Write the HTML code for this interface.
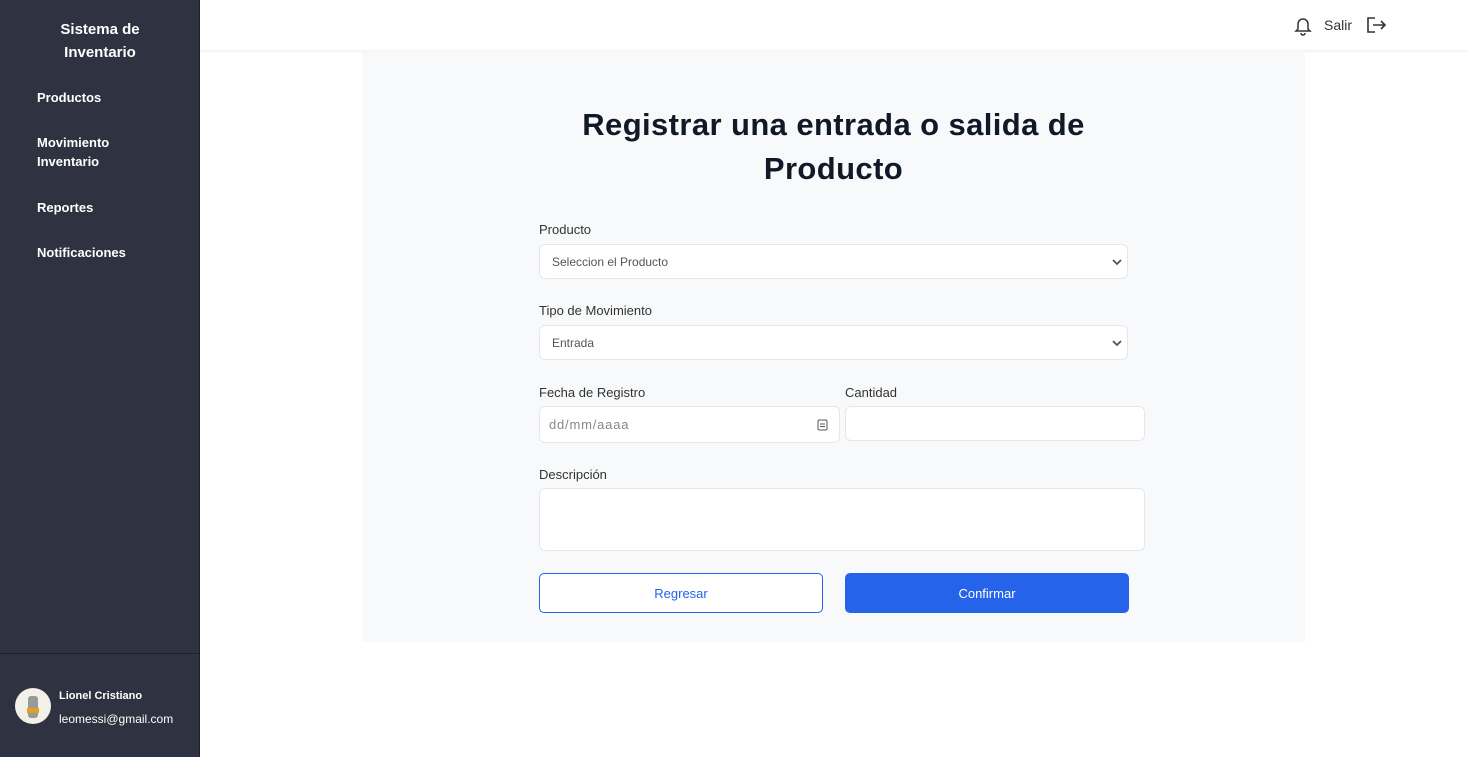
<!DOCTYPE html>
<html><head><meta charset="utf-8"><style>
*{box-sizing:border-box;margin:0;padding:0}
body{width:1468px;height:757px;overflow:hidden;font-family:"Liberation Sans",sans-serif;background:#fff;position:relative;color:#222}
.side{position:absolute;left:0;top:0;width:200px;height:757px;background:#2f3240;border-right:1px solid #1e2029}
.brand{position:absolute;top:18px;left:0;width:200px;text-align:center;color:#fff;font-weight:bold;font-size:15px;line-height:23px}
.nav{position:absolute;left:37px;color:#fff;font-weight:bold;font-size:13px;line-height:19px}
.foot{position:absolute;top:653px;left:0;width:199px;border-top:1px solid #1e2029;height:104px}
.av{position:absolute;left:15px;top:34px;width:36px;height:36px;border-radius:50%;background:#f3f0ea}
.un{position:absolute;left:59px;top:36px;color:#fff;font-size:11px;font-weight:bold}
.ue{position:absolute;left:59px;top:58px;color:#fff;font-size:12px}
.top{position:absolute;left:200px;top:0;right:0;height:50px;background:#fff;box-shadow:0 1px 3px rgba(0,0,0,.08)}
.card{position:absolute;left:362px;top:52px;width:943px;height:590px;background:#f8f9fa}
h1{position:absolute;left:362px;top:103px;width:943px;text-align:center;font-size:31px;letter-spacing:0.4px;line-height:44px;font-weight:bold;color:#111827}
.lbl{position:absolute;font-size:13px;color:#333}
.in{position:absolute;background:#fff;border:1px solid #e5e7eb;border-radius:6px;font-size:12px;color:#555;padding-left:12px;display:flex;align-items:center}
.chev{position:absolute;right:4px;top:12px}
.btn{position:absolute;top:573px;height:40px;border-radius:5px;font-size:13px;display:flex;align-items:center;justify-content:center}
</style></head><body>
<div class="side">
<div class="brand">Sistema de<br>Inventario</div>
<div class="nav" style="top:88px">Productos</div>
<div class="nav" style="top:133px">Movimiento<br>Inventario</div>
<div class="nav" style="top:198px">Reportes</div>
<div class="nav" style="top:243px">Notificaciones</div>
<div class="foot"><div class="av"><svg width="36" height="36"><rect x="13" y="8" width="10" height="22" rx="3" fill="#999"/><rect x="12" y="20" width="12" height="5" fill="#e0a020"/></svg></div>
<div class="un">Lionel Cristiano</div><div class="ue">leomessi@gmail.com</div></div>
</div>
<div class="top">
<svg style="position:absolute;left:1094px;top:16px" width="18" height="20" viewBox="0 0 18 20" fill="none" stroke="#333" stroke-width="1.5"><path d="M4 13V8a5 5 0 0 1 10 0v5l2 2H2z"/><path d="M7 17a2 2 0 0 0 4 0"/></svg>
<div style="position:absolute;left:1124px;top:17px;font-size:14px;color:#333">Salir</div>
<svg style="position:absolute;left:1165px;top:15px" width="22" height="20" viewBox="0 0 22 20" fill="none" stroke="#333" stroke-width="1.6"><path d="M10 3H3v14h7"/><path d="M8 10h12M16 6l4 4-4 4"/></svg>
</div>
<div class="card"></div>
<h1>Registrar una entrada o salida de<br>Producto</h1>
<div class="lbl" style="left:539px;top:222px">Producto</div>
<div class="in" style="left:539px;top:244px;width:589px;height:35px">Seleccion el Producto<svg class="chev" width="12" height="10"><path d="M2 3l4 4 4-4" stroke="#555" stroke-width="1.8" fill="none"/></svg></div>
<div class="lbl" style="left:539px;top:303px">Tipo de Movimiento</div>
<div class="in" style="left:539px;top:325px;width:589px;height:35px">Entrada<svg class="chev" width="12" height="10"><path d="M2 3l4 4 4-4" stroke="#555" stroke-width="1.8" fill="none"/></svg></div>
<div class="lbl" style="left:539px;top:385px">Fecha de Registro</div>
<div class="in" style="left:539px;top:406px;width:301px;height:37px;padding-left:9px;color:#888;font-size:13px;letter-spacing:0.8px">dd/mm/aaaa<svg style="position:absolute;right:11px;top:12px" width="11" height="12"><rect x="1" y="1" width="9" height="10" rx="1.5" fill="none" stroke="#555"/><path d="M3 5h5M3 7.5h5" stroke="#555"/></svg></div>
<div class="lbl" style="left:845px;top:385px">Cantidad</div>
<div class="in" style="left:845px;top:406px;width:300px;height:35px"></div>
<div class="lbl" style="left:539px;top:467px">Descripción</div>
<div class="in" style="left:539px;top:488px;width:606px;height:63px"></div>
<div class="btn" style="left:539px;width:284px;border:1.5px solid #2563eb;background:#fff;color:#2563eb">Regresar</div>
<div class="btn" style="left:845px;width:284px;background:#2563eb;color:#fff">Confirmar</div>
</body></html>
